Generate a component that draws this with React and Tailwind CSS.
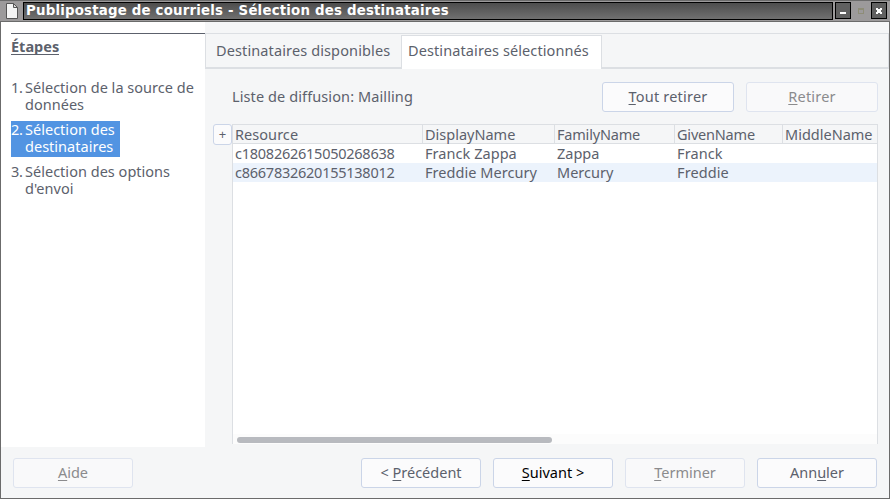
import React from "react";

const columns = [
  { name: "Resource", size: "w-[190px]", track: "tracking-[0.05px]", cell: "tracking-[-0.25px]" },
  { name: "DisplayName", size: "w-[132px]", track: "tracking-[0px]", cell: "tracking-[0.05px]" },
  { name: "FamilyName", size: "w-[120px]", track: "tracking-[-0.2px]", cell: "tracking-[0px]" },
  { name: "GivenName", size: "w-[108px]", track: "tracking-[-0.2px]", cell: "tracking-[0.1px]" },
  { name: "MiddleName", size: "w-[94px]", track: "tracking-[0px]", cell: "tracking-[0px]" },
];

const rows = [
  ["c1808262615050268638", "Franck Zappa", "Zappa", "Franck", ""],
  ["c8667832620155138012", "Freddie Mercury", "Mercury", "Freddie", ""],
];

function Key({ children }) {
  return <span className="underline decoration-1 underline-offset-[2px]">{children}</span>;
}

function Button({ children, className = "", disabled = false }) {
  const tone = disabled
    ? "border-[#dfe4ef] bg-[#f9f9fa] text-[#8b8b8d]"
    : "border-[#cbd5e8] bg-[#fbfbfc]";
  return (
    <button
      className={`flex h-[30px] shrink-0 items-center justify-center rounded-[3px] border pb-[3px] leading-4 ${tone} ${className}`}
    >
      <span className="whitespace-pre">{children}</span>
    </button>
  );
}

function TitleBar() {
  return (
    <header className="flex h-[22px] shrink-0 items-start border-y border-[#6b6b6b] bg-[#9c9a9b] pl-[5px]">
      <svg className="mt-[2px] mr-[4px]" width="14" height="17" viewBox="0 0 14 17">
        <path d="M1.5 .5h7l4 4v11h-11z" fill="#f4f4f4" stroke="#555" />
        <path d="M8.5 .5v4h4z" fill="#ddd" stroke="#555" />
      </svg>
      <div className="mt-px flex h-[18px] w-[810px] shrink-0 items-center border border-black bg-linear-to-b from-[#4d4d4d] to-[#707070] pl-[2px]">
        <h1 className="pb-px font-['DejaVu_Sans',sans-serif] text-[13.33px] leading-4 font-bold tracking-[0.2px] whitespace-nowrap text-white">
          Publipostage de courriels - Sélection des destinataires
        </h1>
      </div>
      <svg className="mt-px ml-[2px]" width="16" height="17" shapeRendering="crispEdges">
        <rect x=".5" y=".5" width="15" height="16" fill="#606060" stroke="#000" />
        <path d="M5 10h6v2H5z" fill="#fff" />
      </svg>
      <svg className="mt-px ml-[2px]" width="16" height="17" shapeRendering="crispEdges">
        <path d="M5 6h6v6H5zM6 8v3h4V8z" fill="#8e8d78" fillRule="evenodd" />
      </svg>
      <svg className="mt-px ml-[2px]" width="16" height="17" shapeRendering="crispEdges">
        <rect x=".5" y=".5" width="15" height="16" fill="#606060" stroke="#000" />
        <path d="M5 6h2v1h2V6h2v2h-1v2h1v2H9v-1H7v1H5v-2h1V8H5z" fill="#fff" />
      </svg>
    </header>
  );
}

function Step({ number, lines, active }) {
  return (
    <li className={`flex w-fit pb-[2px] leading-[17px] ${active ? "bg-[#5294e2] pr-[5px] text-white" : ""}`}>
      <span className="w-[14px] shrink-0 tracking-[-0.3px]">{number}.</span>
      <span className="whitespace-nowrap">
        {lines.map((l) => (
          <span key={l} className="block">{l}</span>
        ))}
      </span>
    </li>
  );
}

export default function App() {
  return (
    <div className="flex h-[499px] w-[890px] flex-col overflow-hidden border-b border-[#6b6b6b] bg-[#f5f6f7] font-['Noto_Sans','Open_Sans',sans-serif] text-[14.5px] text-[#5c616c]">
      <TitleBar />
      <div className="flex min-h-0 flex-1 flex-col border-x border-[#6b6b6b]">
        <div className="flex h-[425px] shrink-0">
          <aside className="w-[204px] shrink-0 bg-white pt-[11px] pl-[10px]">
            <div className="h-px bg-[#5c616c]" />
            <h2 className="mt-[5px] w-fit border-b border-current text-[14.5px] leading-[15px] font-bold tracking-[0px]">
              Étapes
            </h2>
            <ol className="mt-[24px] flex flex-col gap-[6px] tracking-[0.02px]">
              <Step number={1} lines={["Sélection de la source de", "données"]} />
              <Step number={2} lines={["Sélection des", "destinataires"]} active />
              <Step number={3} lines={["Sélection des options", "d'envoi"]} />
            </ol>
          </aside>
          <main className="flex min-w-0 flex-1 flex-col pt-[11px]">
            <nav className="flex h-[36px] shrink-0">
              <div className="flex w-[196px] items-center border-t border-b-2 border-l border-[#dcdfe3] pl-[10px] tracking-[0.12px] whitespace-nowrap">
                Destinataires disponibles
              </div>
              <div className="flex w-[201px] flex-col border-t border-[#dcdfe3] pt-px">
                <div className="flex flex-1 items-center border-x border-t border-[#dcdfe3] bg-white pb-[3px] pl-[6px] tracking-[0.1px] whitespace-nowrap">
                  Destinataires sélectionnés
                </div>
              </div>
              <div className="flex-1 border-t border-r border-b-2 border-[#dcdfe3]" />
            </nav>
            <div className="mt-[13px] flex h-[30px] shrink-0 items-center pr-[11px] pl-[27px]">
              <span className="tracking-[0.1px] whitespace-nowrap">Liste de diffusion: Mailling</span>
              <Button className="ml-auto w-[132px] tracking-[0.2px]"><Key>T</Key>out retirer</Button>
              <Button disabled className="ml-3 w-[132px] tracking-[0.2px]"><Key>R</Key>etirer</Button>
            </div>
            <div className="mt-[12px] flex pl-[8px]">
              <button className="flex h-[21px] w-[19px] shrink-0 items-center justify-center rounded-[3px] border border-[#cbd5e8] bg-[#fbfbfc] text-[13px] leading-none">
                +
              </button>
              <section className="flex h-[320px] w-[646px] flex-col border-x border-t border-[#dcdfe3] bg-white">
                <div className="flex h-[19px] shrink-0 border-b border-[#dcdfe3] bg-[#f5f6f7]">
                  {columns.map((c) => (
                    <div key={c.name} className={`shrink-0 border-r border-[#dcdfe3] pl-[2px] leading-[19px] last:border-r-0 ${c.size} ${c.track}`}>
                      {c.name}
                    </div>
                  ))}
                </div>
                {rows.map((r) => (
                  <div key={r[0]} className="flex h-[19px] shrink-0 odd:bg-[#ecf3fc] even:bg-white">
                    {r.map((v, i) => (
                      <div key={columns[i].name} className={`shrink-0 pl-[2px] leading-[19px] whitespace-nowrap ${columns[i].size} ${columns[i].cell}`}>
                        {v}
                      </div>
                    ))}
                  </div>
                ))}
                <div className="mt-auto h-[10px] bg-[#fcfcfc] pt-[3px] pl-[4px]">
                  <div className="h-[6px] w-[315px] rounded-[3px] bg-[#b8babf]" />
                </div>
              </section>
            </div>
          </main>
        </div>
        <footer className="flex gap-3 pt-[11px] pl-3">
          <Button disabled className="w-[120px]"><Key>A</Key>ide</Button>
          <Button className="ml-[216px] w-[120px]">&lt; <Key>P</Key>récédent</Button>
          <Button className="w-[120px] text-black"><Key>S</Key>uivant &gt;</Button>
          <Button disabled className="w-[120px]"><Key>T</Key>erminer</Button>
          <Button className="w-[120px]">Ann<Key>u</Key>ler</Button>
        </footer>
      </div>
    </div>
  );
}
